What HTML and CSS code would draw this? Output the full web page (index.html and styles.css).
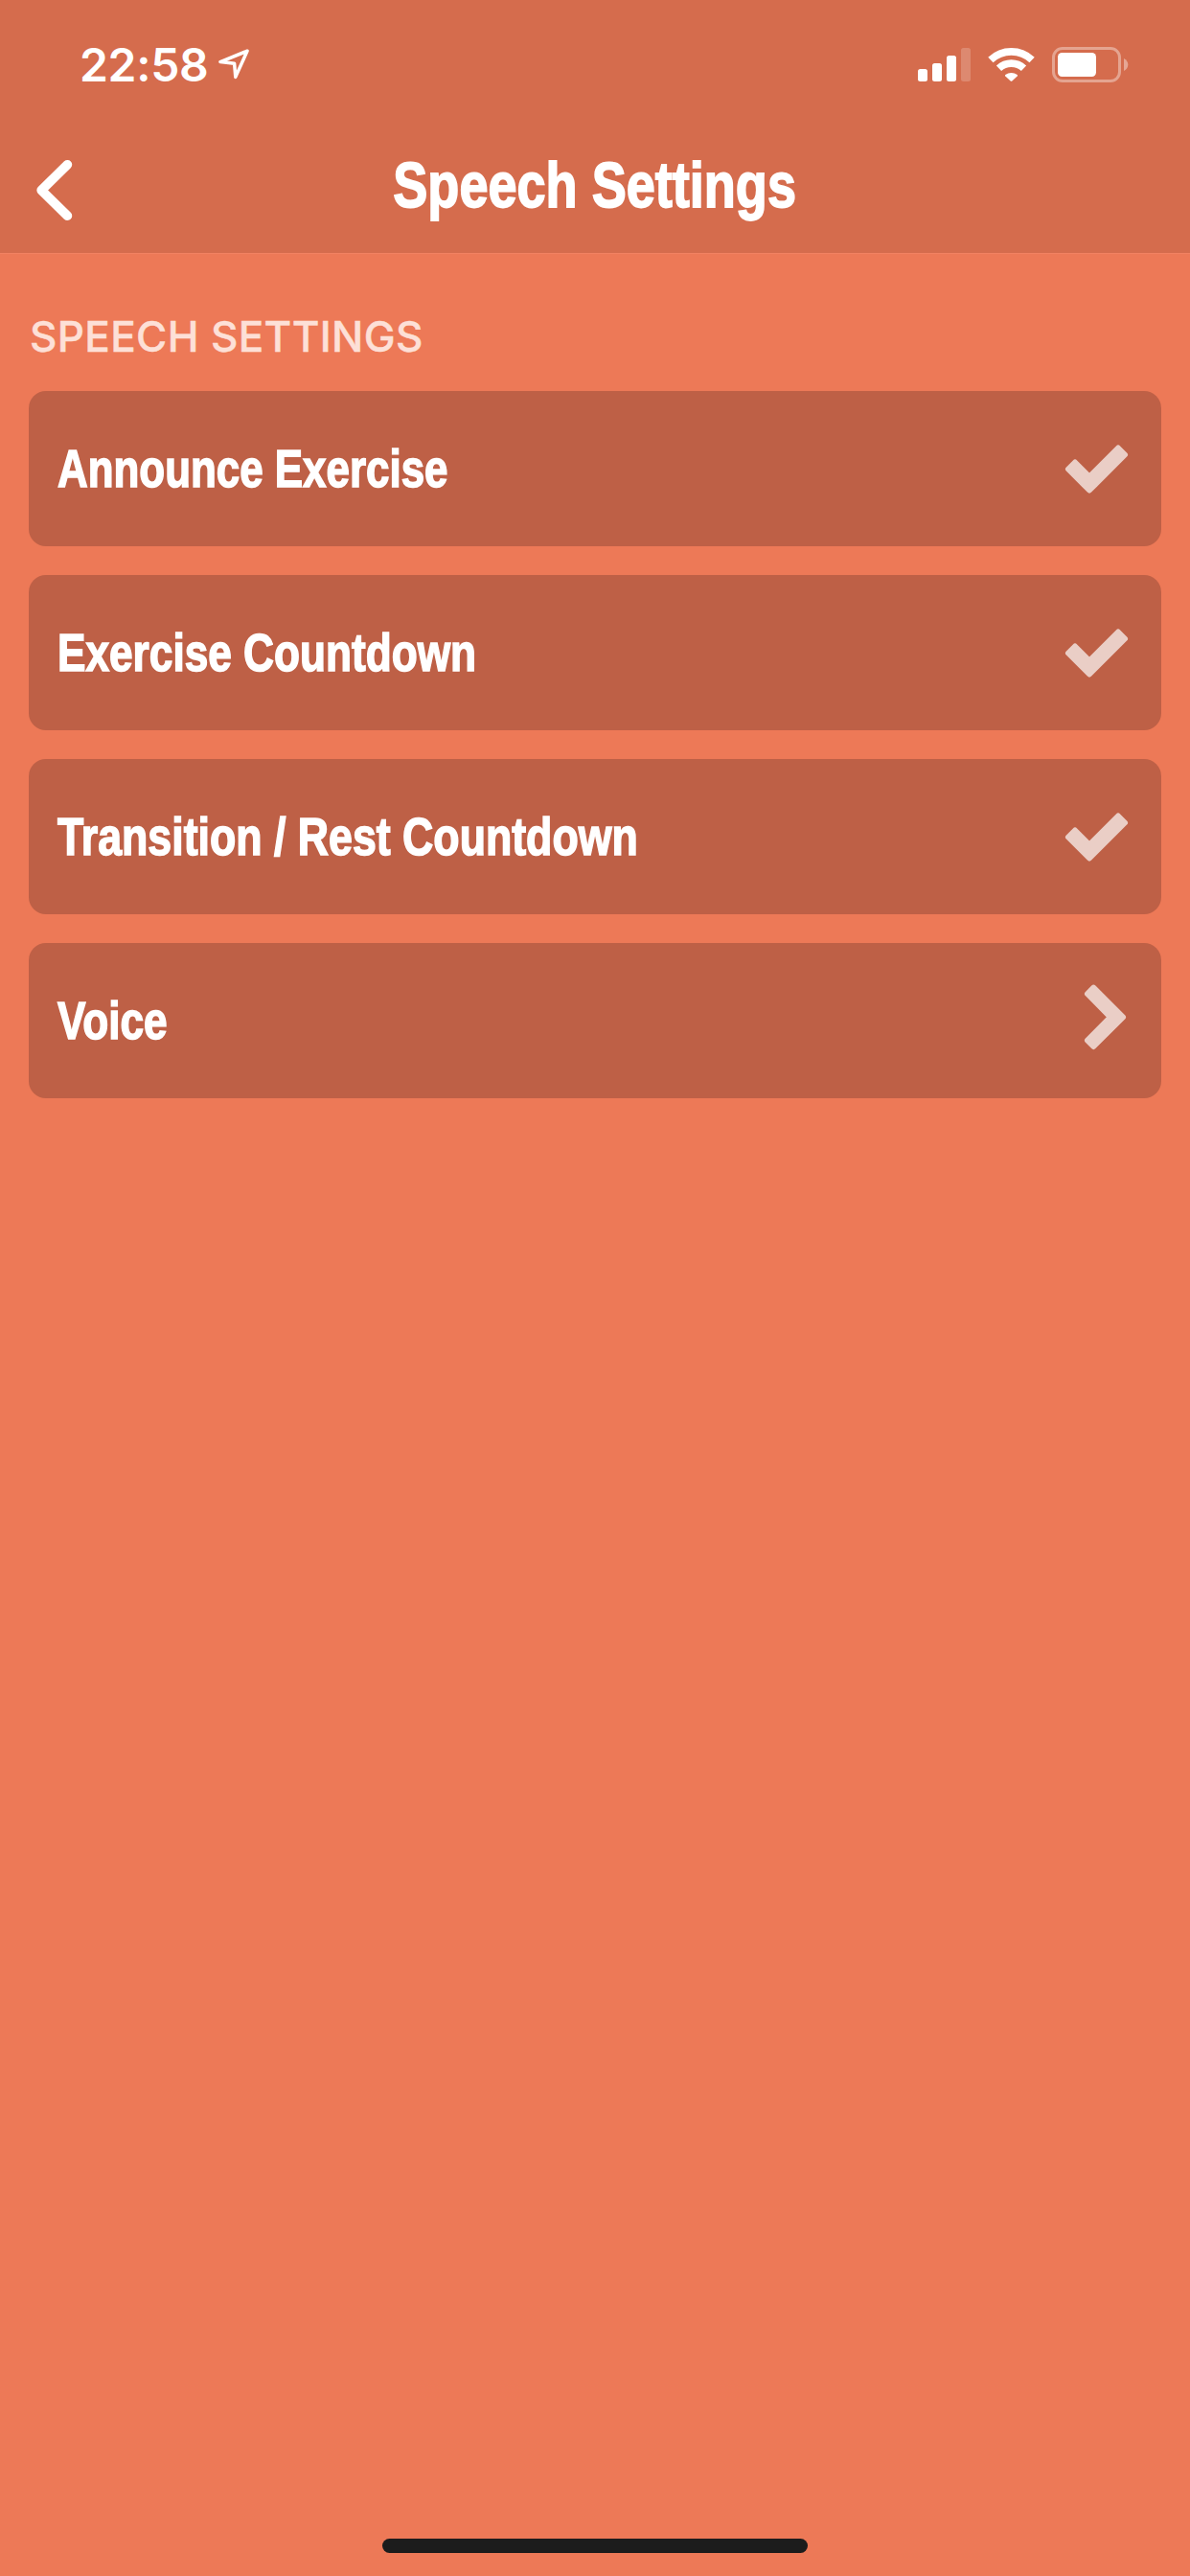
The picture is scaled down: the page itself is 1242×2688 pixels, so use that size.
FILE: index.html
```
<!DOCTYPE html>
<html lang="en">
<head>
    <meta charset="UTF-8">
    <meta name="viewport" content="width=device-width, initial-scale=1.0">
    <title>Speech Settings</title>
    <link rel="stylesheet" href="styles.css">
</head>
<body>
    <header class="header">
        <div class="status-bar">
            <div class="status-left">
                <span class="time">22:58</span>
                <svg class="location" viewBox="0 0 32 32" width="32" height="32">
                    <path d="M30 2.2L2 13.6L16.6 15.2L17.8 29.4Z"/>
                </svg>
            </div>
            <div class="status-right">
                <svg class="signal" viewBox="0 0 55 35" width="55" height="35">
                    <rect x="0" y="22" width="10" height="13" rx="2.5"/>
                    <rect x="15" y="16" width="10" height="19" rx="2.5"/>
                    <rect x="30" y="8" width="10" height="27" rx="2.5"/>
                    <rect class="signal-off" x="45" y="0" width="10" height="35" rx="2.5"/>
                </svg>
                <svg class="wifi" viewBox="0 0 50 36" width="50" height="36">
                    <path class="wifi-arc" d="M2.9 13.6A31.2 31.2 0 0 1 46.1 13.6"/>
                    <path class="wifi-arc" d="M11.5 22.3A18.8 18.8 0 0 1 37.5 22.3"/>
                    <path d="M18.3 29A10.2 10.2 0 0 1 30.7 29Q31.4 29.7 30.7 30.4L25.3 35.5Q24.5 36.2 23.7 35.5L18.3 30.4Q17.6 29.7 18.3 29Z"/>
                </svg>
                <svg class="battery" viewBox="0 0 80 37" width="80" height="37">
                    <rect class="battery-frame" x="1.5" y="1.5" width="69" height="34" rx="9.5"/>
                    <rect x="6" y="6" width="40" height="25" rx="4.5"/>
                    <path class="battery-tip" d="M75 12Q79.3 14.5 79.3 18.5Q79.3 22.5 75 25Z"/>
                </svg>
            </div>
        </div>
        <div class="nav-bar">
            <svg class="back" viewBox="0 0 38 64" width="38" height="64">
                <path d="M32.4 4.8L5.2 31.5L32.4 58.2"/>
            </svg>
            <h1 class="title">Speech Settings</h1>
        </div>
    </header>

    <main class="content">
        <h2 class="section-title">SPEECH SETTINGS</h2>
        <div class="settings-list">
            <div class="setting">
                <span class="label">Announce Exercise</span>
                <svg class="icon" viewBox="0 0 66 50" width="66" height="50">
                    <path d="M3 25.5L10 18.5L25 33.5L55 3.5L62 10.5L25 47.5Z"/>
                </svg>
            </div>
            <div class="setting">
                <span class="label label-wide">Exercise Countdown</span>
                <svg class="icon" viewBox="0 0 66 50" width="66" height="50">
                    <path d="M3 25.5L10 18.5L25 33.5L55 3.5L62 10.5L25 47.5Z"/>
                </svg>
            </div>
            <div class="setting">
                <span class="label label-wider">Transition / Rest Countdown</span>
                <svg class="icon" viewBox="0 0 66 50" width="66" height="50">
                    <path d="M3 25.5L10 18.5L25 33.5L55 3.5L62 10.5L25 47.5Z"/>
                </svg>
            </div>
            <div class="setting">
                <span class="label label-wide">Voice</span>
                <svg class="icon icon-next" viewBox="0 0 44 68" width="44" height="68">
                    <path d="M9.3 2.7L3 9L27 33.3L3 57.7L9.3 64L40 33.3Z"/>
                </svg>
            </div>
        </div>
    </main>

    <div class="home-indicator"></div>
</body>
</html>
```
FILE: styles.css
```
* {
    margin: 0;
    padding: 0;
    box-sizing: border-box;
}

body {
    display: flex;
    flex-direction: column;
    height: 2688px;
    background: #ed7957;
    font-family: 'Liberation Sans', Arial, sans-serif;
    color: #fff;
    overflow: hidden;
}

svg {
    display: block;
    flex-shrink: 0;
    overflow: visible;
    fill: #fff;
}

.header {
    height: 265px;
    background: #d56c4d;
    border-bottom: 1px solid #f28262;
}

/* Status bar */
.status-bar {
    display: flex;
    justify-content: space-between;
    height: 132px;
    padding: 49px 64px 0 83px;
}

.status-left,
.status-right {
    display: flex;
    align-items: flex-start;
}

.time {
    width: 145px;
    font-family: Inter, sans-serif;
    font-size: 48px;
    font-weight: 600;
    line-height: 38px;
    letter-spacing: -0.3px;
    white-space: nowrap;
}

.location {
    margin-top: 2px;
}

.location path {
    fill: none;
    stroke: #fff;
    stroke-width: 3.5;
    stroke-linejoin: round;
}

.signal {
    margin: 1px 18px 0 0;
}

.signal-off {
    opacity: 0.2;
}

.wifi {
    margin-right: 17px;
}

.wifi-arc {
    fill: none;
    stroke: #fff;
    stroke-width: 7.6;
}

.battery-frame {
    fill: none;
    stroke: #fff;
    stroke-width: 3;
    opacity: 0.38;
}

.battery-tip {
    opacity: 0.4;
}

/* Navigation bar */
.nav-bar {
    display: grid;
    grid-template-columns: 200px 1fr 200px;
    height: 132px;
}

.back {
    margin: 35px 0 0 38px;
}

.back path {
    fill: none;
    stroke: #fff;
    stroke-width: 9.7;
    stroke-linecap: round;
    stroke-linejoin: round;
}

.title {
    justify-self: center;
    margin-top: 23px;
    font-size: 67px;
    line-height: 76px;
    white-space: nowrap;
    -webkit-text-stroke: 1.8px #fff;
    transform: scaleX(0.807);
}

/* Settings */
.content {
    flex: 1;
    padding: 61px 30px 0;
}

.section-title {
    height: 82px;
    padding-left: 1px;
    font-family: Inter, sans-serif;
    font-size: 44px;
    font-weight: 500;
    line-height: 50px;
    letter-spacing: 0.35px;
    color: #fde0d7;
    white-space: nowrap;
    -webkit-text-stroke: 0.4px #fde0d7;
}

.settings-list {
    display: flex;
    flex-direction: column;
    gap: 30px;
}

.setting {
    display: flex;
    align-items: center;
    justify-content: space-between;
    height: 162px;
    padding: 0 34px 0 30px;
    background: #be6046;
    border-radius: 18px;
}

/* condensed look, widths tuned per label */
.label {
    font-size: 56px;
    font-weight: 700;
    line-height: 64px;
    white-space: nowrap;
    -webkit-text-stroke: 1.6px #fff;
    transform: scaleX(0.784);
    transform-origin: left center;
}

.label-wide {
    transform: scaleX(0.789);
}

.label-wider {
    transform: scaleX(0.798);
}

.icon {
    fill: #eacec6;
    stroke: #eacec6;
    stroke-width: 6;
    stroke-linejoin: round;
}

.icon-next {
    margin: 0 2px 6px 0;
}

.home-indicator {
    align-self: center;
    width: 444px;
    height: 15px;
    margin-bottom: 24px;
    background: #1c1c1c;
    border-radius: 8px;
}
```
